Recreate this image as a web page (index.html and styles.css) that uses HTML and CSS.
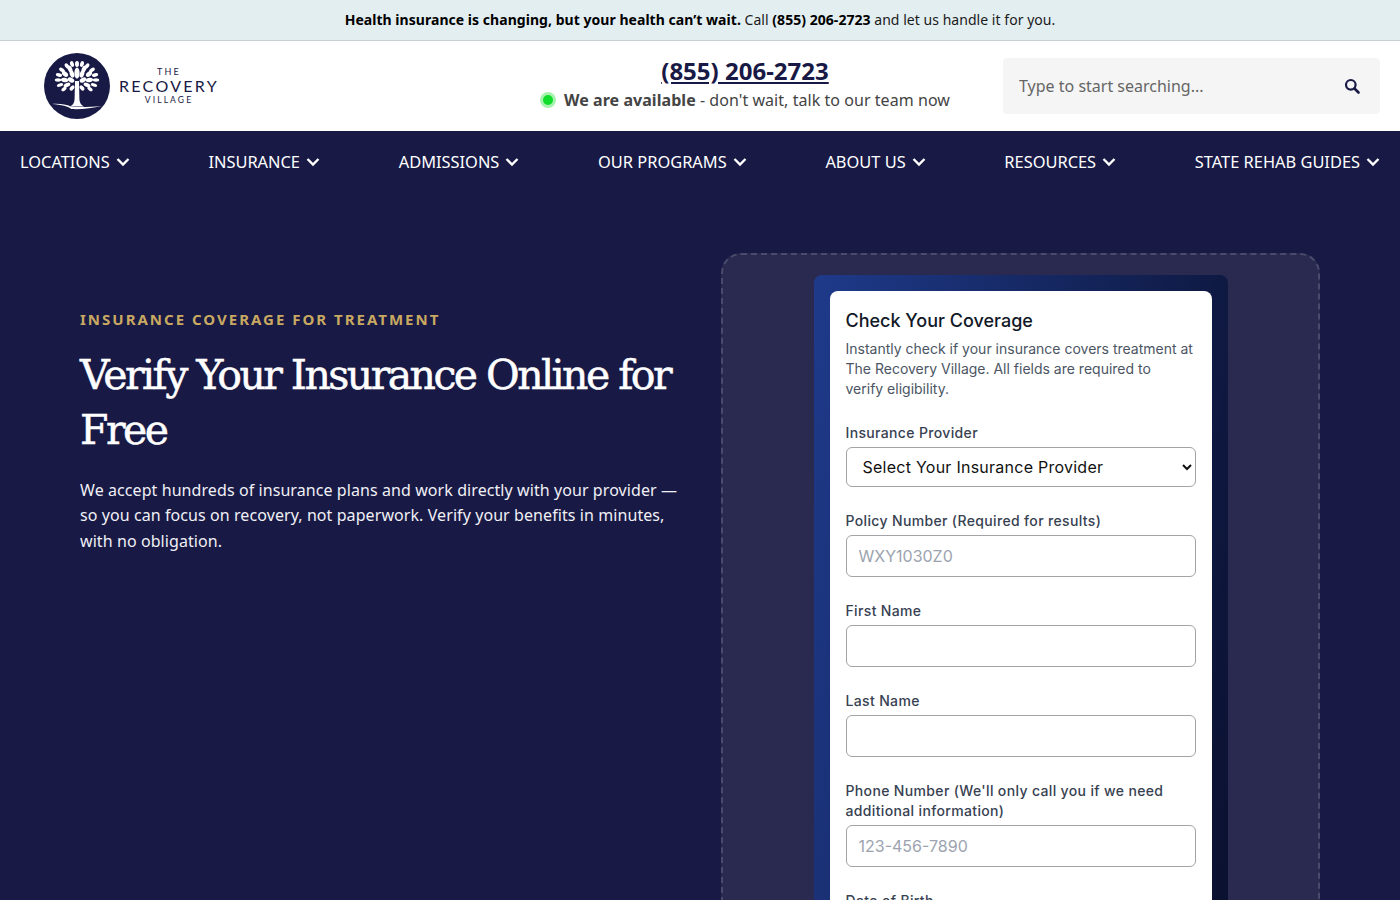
FILE: index.html
```html
<!DOCTYPE html>
<html lang="en">
<head>
  <meta charset="UTF-8">
  <meta name="viewport" content="width=device-width, initial-scale=1.0">
  <title>Verify Your Insurance - The Recovery Village</title>
  <link rel="stylesheet" href="styles.css">
</head>
<body>
  <div class="top-bar">
    <strong>Health insurance is changing, but your health can’t wait.</strong> Call <strong>(855) 206-2723</strong> and let us handle it for you.
  </div>

  <header class="site-header">
    <a class="logo" href="#">
      <svg class="logo-mark" viewBox="0 0 66 66" aria-hidden="true">
        <circle cx="33" cy="33" r="33" fill="#181945"/>
        <g fill="#fff">
          <ellipse cx="33" cy="20" rx="2.600" ry="5.500"/>
          <ellipse cx="33" cy="11" rx="2" ry="3"/>
          <ellipse cx="28" cy="11" rx="1.900" ry="3" transform="rotate(-18 28 11)"/>
          <ellipse cx="38" cy="11" rx="1.900" ry="3" transform="rotate(18 38 11)"/>
          <ellipse cx="23" cy="13" rx="1.900" ry="3" transform="rotate(-35 23 13)"/>
          <ellipse cx="43" cy="13" rx="1.900" ry="3" transform="rotate(35 43 13)"/>
          <ellipse cx="18" cy="17" rx="1.800" ry="3.200" transform="rotate(-55 18 17)"/>
          <ellipse cx="48" cy="17" rx="1.800" ry="3.200" transform="rotate(55 48 17)"/>
          <ellipse cx="15" cy="22" rx="1.700" ry="3.200" transform="rotate(-75 15 22)"/>
          <ellipse cx="51" cy="22" rx="1.700" ry="3.200" transform="rotate(75 51 22)"/>
          <ellipse cx="14" cy="27" rx="1.700" ry="3.200" transform="rotate(-90 14 27)"/>
          <ellipse cx="52" cy="27" rx="1.700" ry="3.200" transform="rotate(90 52 27)"/>
          <ellipse cx="16" cy="32" rx="1.700" ry="3.200" transform="rotate(-108 16 32)"/>
          <ellipse cx="50" cy="32" rx="1.700" ry="3.200" transform="rotate(108 50 32)"/>
          <ellipse cx="20" cy="36" rx="1.700" ry="3" transform="rotate(-125 20 36)"/>
          <ellipse cx="46" cy="36" rx="1.700" ry="3" transform="rotate(125 46 36)"/>
          <ellipse cx="26" cy="16" rx="2.200" ry="3.600" transform="rotate(-22 26 16)"/>
          <ellipse cx="40" cy="16" rx="2.200" ry="3.600" transform="rotate(22 40 16)"/>
          <ellipse cx="21" cy="21" rx="2.200" ry="3.600" transform="rotate(-50 21 21)"/>
          <ellipse cx="45" cy="21" rx="2.200" ry="3.600" transform="rotate(50 45 21)"/>
          <ellipse cx="20.500" cy="27" rx="2.200" ry="3.600" transform="rotate(-80 20.500 27)"/>
          <ellipse cx="45.500" cy="27" rx="2.200" ry="3.600" transform="rotate(80 45.500 27)"/>
          <ellipse cx="23" cy="32" rx="2" ry="3.600" transform="rotate(-115 23 32)"/>
          <ellipse cx="43" cy="32" rx="2" ry="3.600" transform="rotate(115 43 32)"/>
          <ellipse cx="28" cy="21" rx="2.200" ry="3.800" transform="rotate(-18 28 21)"/>
          <ellipse cx="38" cy="21" rx="2.200" ry="3.800" transform="rotate(18 38 21)"/>
          <ellipse cx="27" cy="27" rx="2.200" ry="3.600" transform="rotate(-60 27 27)"/>
          <ellipse cx="39" cy="27" rx="2.200" ry="3.600" transform="rotate(60 39 27)"/>
          <ellipse cx="28" cy="35" rx="1.800" ry="3" transform="rotate(-140 28 35)"/>
          <ellipse cx="38" cy="35" rx="1.800" ry="3" transform="rotate(140 38 35)"/>
          <path d="M31 28h4l.4 18c.3 4 1.600 6 4.600 7.500H26c3-1.500 4.300-3.500 4.600-7.500z"/>
          <path d="M8 51c8-.5 14 .5 19 2.500 7 1 19 .5 31-.5-10 2.500-22 3.500-31 3-2-2.500-10-4.500-19-5z"/>
        </g>
      </svg>
      <span class="logo-text">
        <span class="logo-the">THE</span>
        <span class="logo-name">RECOVERY</span>
        <span class="logo-village">VILLAGE</span>
      </span>
    </a>

    <div class="header-contact">
      <a class="header-phone" href="#">(855) 206-2723</a>
      <div class="availability"><span class="status-dot"></span><span><strong>We are available</strong> - don't wait, talk to our team now</span></div>
    </div>

    <form class="search">
      <input class="search-input" type="text" placeholder="Type to start searching...">
      <svg class="search-icon" viewBox="0 0 16 16" aria-hidden="true">
        <circle cx="6.800" cy="6.800" r="4.800" fill="none" stroke="#181945" stroke-width="2.200"/>
        <path d="M10.500 10.500l4 4" stroke="#181945" stroke-width="2.600" stroke-linecap="round"/>
      </svg>
    </form>
  </header>

  <main class="hero-wrap">
    <nav class="main-nav">
      <a href="#">LOCATIONS <svg class="chevron" viewBox="0 0 14 10"><path d="M1.500 2l5.500 5.500L12.500 2"/></svg></a>
      <a href="#">INSURANCE <svg class="chevron" viewBox="0 0 14 10"><path d="M1.500 2l5.500 5.500L12.500 2"/></svg></a>
      <a href="#">ADMISSIONS <svg class="chevron" viewBox="0 0 14 10"><path d="M1.500 2l5.500 5.500L12.500 2"/></svg></a>
      <a href="#">OUR PROGRAMS <svg class="chevron" viewBox="0 0 14 10"><path d="M1.500 2l5.500 5.500L12.500 2"/></svg></a>
      <a href="#">ABOUT US <svg class="chevron" viewBox="0 0 14 10"><path d="M1.500 2l5.500 5.500L12.500 2"/></svg></a>
      <a href="#">RESOURCES <svg class="chevron" viewBox="0 0 14 10"><path d="M1.500 2l5.500 5.500L12.500 2"/></svg></a>
      <a href="#">STATE REHAB GUIDES <svg class="chevron" viewBox="0 0 14 10"><path d="M1.500 2l5.500 5.500L12.500 2"/></svg></a>
    </nav>

    <section class="hero">
      <div class="hero-copy">
        <div class="eyebrow">INSURANCE COVERAGE FOR TREATMENT</div>
        <h1>Verify Your Insurance Online for Free</h1>
        <p>We accept hundreds of insurance plans and work directly with your provider — so you can focus on recovery, not paperwork. Verify your benefits in minutes, with no obligation.</p>
      </div>

      <div class="form-panel">
        <div class="form-frame">
          <form class="coverage-card">
            <h2>Check Your Coverage</h2>
            <p class="card-intro">Instantly check if your insurance covers treatment at The Recovery Village. All fields are required to<br>verify eligibility.</p>

            <div class="field">
              <label>Insurance Provider</label>
              <select class="provider-select"><option>Select Your Insurance Provider</option></select>
            </div>
            <div class="field">
              <label>Policy Number (Required for results)</label>
              <input type="text" placeholder="WXY1030Z0">
            </div>
            <div class="field">
              <label>First Name</label>
              <input type="text">
            </div>
            <div class="field">
              <label>Last Name</label>
              <input type="text">
            </div>
            <div class="field">
              <label>Phone Number (We'll only call you if we need additional information)</label>
              <input type="text" placeholder="123-456-7890">
            </div>
            <div class="field">
              <label>Date of Birth</label>
              <input type="text">
            </div>
          </form>
        </div>
      </div>
    </section>
  </main>
</body>
</html>
```

FILE: styles.css
```css
* {
  margin: 0;
  padding: 0;
  box-sizing: border-box;
}

html, body {
  height: 900px;
  overflow: hidden;
}

body {
  font-family: 'Noto Sans', 'Open Sans', sans-serif;
  background: #181945;
  color: #111;
}

a {
  color: inherit;
  text-decoration: none;
}

.top-bar {
  height: 41px;
  background: #e3eef1;
  border-bottom: 1px solid #c5d0d3;
  text-align: center;
  font-size: 14px;
  line-height: 39px;
  letter-spacing: 0.040px;
  color: #1a1a1a;
}

.top-bar strong {
  color: #000;
}

.site-header {
  height: 90px;
  background: #fff;
  display: flex;
  align-items: center;
  padding: 0 20px 0 44px;
}

.logo {
  display: flex;
  align-items: center;
  gap: 9px;
  width: 450px;
}

.logo-mark {
  width: 66px;
  height: 66px;
  flex-shrink: 0;
}

.logo-text {
  display: flex;
  flex-direction: column;
  align-items: center;
  font-family: 'Lato', sans-serif;
  color: #181945;
}

.logo-the {
  font-size: 9px;
  letter-spacing: 2.200px;
  line-height: 10px;
}

.logo-name {
  font-size: 16px;
  letter-spacing: 2.300px;
  line-height: 18px;
}

.logo-village {
  font-size: 8.500px;
  letter-spacing: 2.100px;
  line-height: 10px;
}

.header-contact {
  width: 502px;
  display: flex;
  flex-direction: column;
  align-items: center;
  gap: 1px;
  padding-bottom: 6px;
}

.header-phone {
  font-size: 24px;
  font-weight: 700;
  line-height: 32px;
  color: #181945;
  text-decoration: underline;
}

.availability {
  display: flex;
  align-items: center;
  gap: 8px;
  font-size: 16px;
  line-height: 24px;
  letter-spacing: 0.050px;
  color: #444;
  white-space: nowrap;
}

.status-dot {
  width: 10px;
  height: 10px;
  margin: 0 3px;
  border-radius: 50%;
  background: #0fdc2b;
  box-shadow: 0 0 0 3px #a6f2ae;
}

.search {
  width: 377px;
  height: 56px;
  margin-left: auto;
  background: #f5f5f5;
  border-radius: 4px;
  display: flex;
  align-items: center;
  padding: 0 20px 0 16px;
}

.search-input {
  flex: 1;
  border: none;
  background: none;
  outline: none;
  font-family: inherit;
  font-size: 16px;
  color: #333;
}

.search-input::placeholder {
  color: #666;
  opacity: 1;
}

.search-icon {
  width: 16px;
  height: 16px;
}

.hero-wrap {
  background: #181945;
}

.main-nav {
  display: flex;
  justify-content: space-between;
  padding: 18px 20px;
}

.main-nav a {
  display: flex;
  align-items: center;
  gap: 6px;
  color: #fff;
  font-size: 16.400px;
  line-height: 26px;
}

.chevron {
  width: 14px;
  height: 10px;
  fill: none;
  stroke: #fff;
  stroke-width: 2.400;
}

.hero {
  display: grid;
  grid-template-columns: 601px 599px;
  gap: 40px;
  padding: 60px 80px 0;
}

.hero-copy {
  padding-top: 55px;
}

.eyebrow {
  font-size: 15px;
  font-weight: 700;
  letter-spacing: 2px;
  color: #c9a961;
  line-height: 22px;
  margin-bottom: 18px;
}

h1 {
  font-family: 'DejaVu Serif', serif;
  font-size: 41px;
  font-weight: 400;
  line-height: 55px;
  letter-spacing: -2.550px;
  -webkit-text-stroke: 0.500px #fff;
  color: #fff;
  margin-bottom: 19.700px;
}

.hero-copy p {
  font-size: 16px;
  line-height: 25.500px;
  letter-spacing: 0.080px;
  color: #f0f0f5;
}

.form-panel {
  background: #2a2a50;
  border: 2px dashed #4a4a6a;
  border-radius: 20px;
  padding: 20px 0 0;
  height: 900px;
}

.form-frame {
  width: 414px;
  margin: 0 auto;
  padding: 16px;
  border-radius: 8px;
  background: linear-gradient(100deg, #1e3a8a 0%, #0a0f2c 100%);
}

.coverage-card {
  background: #fff;
  border-radius: 8px;
  padding: 16px;
  font-family: 'Inter', sans-serif;
}

.coverage-card h2 {
  font-size: 18px;
  font-weight: 500;
  line-height: 28px;
  color: #111827;
  margin-bottom: 4px;
}

.card-intro {
  font-size: 14px;
  line-height: 20px;
  color: #4b5563;
  margin-bottom: 24px;
}

.field {
  margin-bottom: 24px;
}

.field label {
  display: block;
  font-size: 14px;
  font-weight: 500;
  line-height: 20px;
  letter-spacing: 0.350px;
  color: #374151;
  margin-bottom: 4px;
}

.field input, .provider-select {
  display: block;
  width: 100%;
  height: 42px;
  border: 1px solid #a3a3a8;
  border-radius: 6px;
  background: #fff;
  font-family: inherit;
  font-size: 16px;
  padding: 0 12px;
}

.field input::placeholder {
  color: #9ca3af;
  opacity: 1;
}

.provider-select {
  height: 40px;
  letter-spacing: 0.250px;
  color: #111;
}
```
